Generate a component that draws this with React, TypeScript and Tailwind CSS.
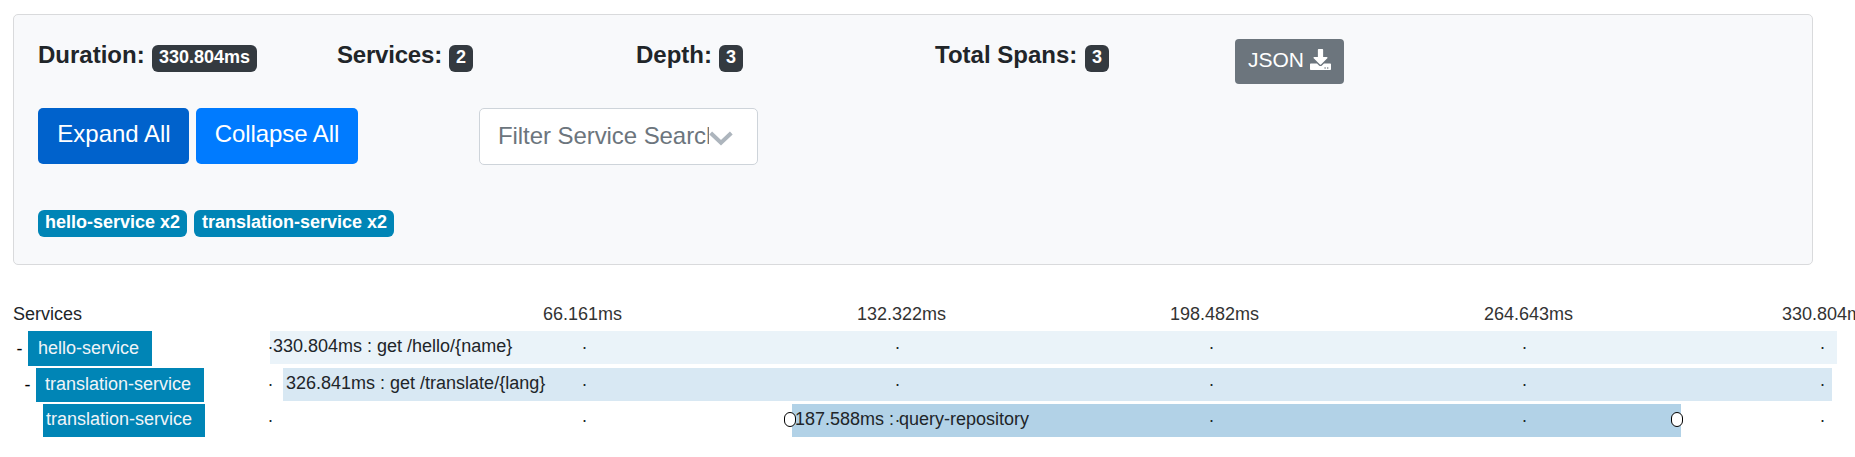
import React from "react";
import { FaDownload } from "react-icons/fa";

const stats = [
  { label: "Duration:", value: "330.804ms", size: "w-[114px]" },
  { label: "Services:", value: "2", size: "w-[112px] tracking-[-0.2px]" },
  { label: "Depth:", value: "3", size: "w-[83px]" },
  { label: "Total Spans:", value: "3", size: "w-[150px]" },
];

const ticks = [
  { label: "66.161ms", left: 273 },
  { label: "132.322ms", left: 587 },
  { label: "198.482ms", left: 900 },
  { label: "264.643ms", left: 1214 },
  { label: "330.804ms", left: 1512 },
];

const dots = [-2, 312, 625, 939, 1252, 1550];

function Dots() {
  return (
    <>
      {dots.map((x) => (
        <span key={x} className="absolute top-[2px] leading-[21px]" style={{ left: x }}>
          .
        </span>
      ))}
    </>
  );
}

export default function App() {
  return (
    <div className="h-[457px] w-[1855px] overflow-hidden bg-white pt-[14px] font-['Liberation_Sans',sans-serif] text-[#212529]">
      <section className="ml-[13px] h-[251px] w-[1800px] rounded-[5px] border border-[#d9dadc] bg-[#f8f9fb] pl-[24px]">
        <div className="flex h-[93px] pt-[24px]">
          {stats.map((s) => (
            <div key={s.label} className="flex w-[299px] items-start">
              <span className={`${s.size} shrink-0 text-[24px] leading-[32px] font-bold whitespace-nowrap`}>
                {s.label}
              </span>
              <span className="mt-[6px] h-[27px] rounded-[6px] bg-[#343a40] px-[7px] pt-[3px] text-[18px] leading-[18px] font-bold text-white">
                {s.value}
              </span>
            </div>
          ))}
          <button className="ml-px flex h-[45px] w-[109px] items-start rounded-[4px] bg-[#6c757d] pl-[13px] text-[21px] text-white">
            <span className="mt-[5px] leading-[32px]">JSON</span>
            <FaDownload className="mt-[10px] ml-[6px] h-[21px] w-[21px] shrink-0" />
          </button>
        </div>
        <div className="flex h-[102px]">
          <button className="mr-[7px] h-[56px] w-[151px] rounded-[5px] bg-[#0062cc] pb-[4px] pl-px text-[24px] text-white">
            Expand All
          </button>
          <button className="mr-[121px] h-[56px] w-[162px] rounded-[5px] bg-[#007bff] pb-[4px] text-[24px] tracking-[-0.06px] text-white">
            Collapse All
          </button>
          <div className="flex h-[57px] w-[279px] items-start rounded-[5px] border border-[#ced4da] bg-white pl-[18px] text-[24px] text-[#6c757d]">
            <span className="mt-[9px] w-[211px] shrink-0 overflow-hidden leading-[36px] tracking-[-0.07px] whitespace-nowrap">
              Filter Service Search
            </span>
            <svg className="mt-[22px] h-[15px] w-[24px]" viewBox="0 0 24 15" fill="none" stroke="#adb5bd" strokeWidth="4">
              <path d="M1.7 2L12 11.8L22.3 2" />
            </svg>
          </div>
        </div>
        <div className="flex gap-[7px] text-[18px] leading-[18px] font-bold text-white">
          <span className="h-[27px] w-[149px] rounded-[6px] bg-[#0085b6] pt-[3px] text-center">hello-service x2</span>
          <span className="h-[27px] w-[200px] rounded-[6px] bg-[#0085b6] pt-[3px] pl-px text-center">
            translation-service x2
          </span>
        </div>
      </section>

      <section className="pt-[38px] text-[18px] leading-[21px]">
        <div className="flex h-[28px]">
          <div className="w-[270px] shrink-0 pt-px pl-[13px]">Services</div>
          <div className="relative grow pt-px">
            {ticks.map((t) => (
              <span key={t.label} className="absolute whitespace-nowrap text-[#333]" style={{ left: t.left }}>
                {t.label}
              </span>
            ))}
          </div>
        </div>

        <div className="flex h-[37px]">
          <div className="flex w-[270px] shrink-0">
            <span className="w-[28px] pt-[8px] pl-[16.5px] text-black">-</span>
            <div className="h-[35px] w-[124px] bg-[#0085b6] pt-[7px] pl-[10px] text-[#f0f4f8]">hello-service</div>
          </div>
          <div className="relative grow">
            <div className="h-[33px] w-[1567px] bg-[#eaf3f9] pt-[5px] pl-[3px]">330.804ms : get /hello/&#123;name&#125;</div>
            <Dots />
          </div>
        </div>

        <div className="flex h-[36px]">
          <div className="flex w-[270px] shrink-0">
            <span className="w-[36px] pt-[7px] pl-[24.5px] text-black">-</span>
            <div className="h-[34px] w-[168px] bg-[#0085b6] pt-[6px] pl-[9px] text-[#f0f4f8]">translation-service</div>
          </div>
          <div className="relative grow">
            <div className="ml-[13px] h-[33px] w-[1549px] bg-[#d8e8f3] pt-[5px] pl-[3px]">
              326.841ms : get /translate/&#123;lang&#125;
            </div>
            <Dots />
          </div>
        </div>

        <div className="flex h-[36px]">
          <div className="w-[270px] shrink-0 pl-[43px]">
            <div className="h-[33px] w-[162px] bg-[#0085b6] pt-[5px] pl-[3px] text-[#f0f4f8]">translation-service</div>
          </div>
          <div className="relative grow">
            <div className="ml-[522px] h-[33px] w-[889px] bg-[#b2d2e7] pt-[5px] pl-[3px]">
              187.588ms : query-repository
            </div>
            <Dots />
            <span className="absolute top-[8px] left-[514px] h-[15px] w-[12px] rounded-[6px] border border-black bg-white" />
            <span className="absolute top-[8px] left-[1401px] h-[15px] w-[12px] rounded-[6px] border border-black bg-white" />
          </div>
        </div>
      </section>
    </div>
  );
}
